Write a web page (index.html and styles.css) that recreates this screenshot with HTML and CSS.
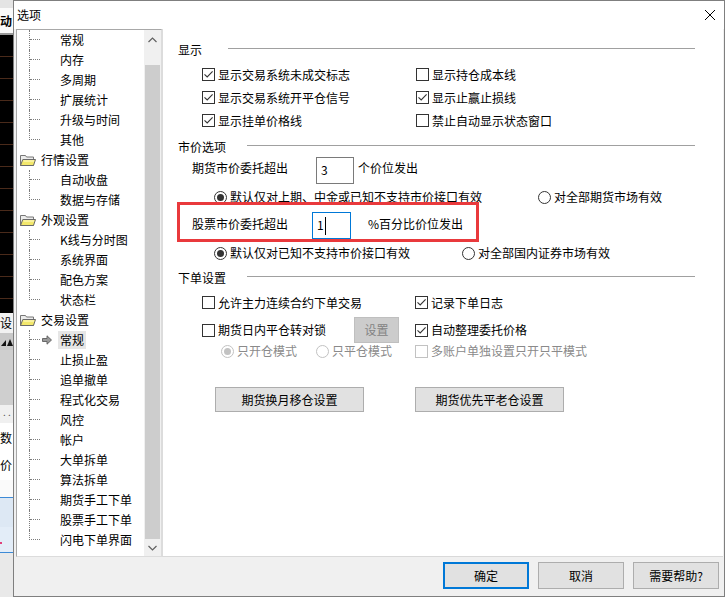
FILE: index.html
```html
<!DOCTYPE html>
<html lang="zh-CN">
<head>
<meta charset="utf-8">
<title>选项</title>
<link rel="stylesheet" href="styles.css">
</head>
<body>
<div class="screen">
  <div class="bgapp">
    <div class="bg-top"></div>
    <div class="bg-tab">动</div>
    <div class="bg-rule"></div>
    <div class="bg-chart"></div>
    <div class="bg-label">设</div>
    <div class="bg-tool"><span class="tri-a"></span><span class="tri-b"></span></div>
    <div class="bg-grey"></div>
    <div class="bg-dots">. .</div>
    <div class="bg-field">数</div>
    <div class="bg-field bg-field2">价</div>
    <div class="bg-blank"></div>
    <div class="bg-blue"></div>
    <div class="bg-blue2"><span class="bg-dot"></span></div>
    <div class="bg-rest"></div>
  </div>

  <div class="dialog">
    <div class="titlebar">
      <span class="title">选项</span>
      <svg class="close" width="10" height="10" viewBox="0 0 10 10"><path d="M0 0 L10 10 M10 0 L0 10" stroke="#000" stroke-width="1" fill="none"/></svg>
    </div>

    <div class="body">
      <div class="tree">
        <ul class="tree-list">
          <li class="node child"><span class="conn"><span class="conn-h"></span></span><span class="slot"></span><span class="lbl">常规</span></li>
          <li class="node child"><span class="conn"><span class="conn-h"></span></span><span class="slot"></span><span class="lbl">内存</span></li>
          <li class="node child"><span class="conn"><span class="conn-h"></span></span><span class="slot"></span><span class="lbl">多周期</span></li>
          <li class="node child"><span class="conn"><span class="conn-h"></span></span><span class="slot"></span><span class="lbl">扩展统计</span></li>
          <li class="node child"><span class="conn"><span class="conn-h"></span></span><span class="slot"></span><span class="lbl">升级与时间</span></li>
          <li class="node child last"><span class="conn"><span class="conn-h"></span></span><span class="slot"></span><span class="lbl">其他</span></li>
          <li class="node parent"><svg class="folder" width="16" height="13" viewBox="0 0 16 13"><path d="M0.5 1.5 L5.5 1.5 L6.5 3 L13.5 3 L13.5 11.5 L0.5 11.5 Z" fill="#ececec" stroke="#777"/><path d="M0.5 11.5 L2.8 5.5 L15.5 5.5 L13.5 11.5 Z" fill="#f3e86c" stroke="#6a6a6a"/><path d="M3.5 7 L14 7" stroke="#fffbd0"/></svg><span class="lbl">行情设置</span></li>
          <li class="node child"><span class="conn"><span class="conn-h"></span></span><span class="slot"></span><span class="lbl">自动收盘</span></li>
          <li class="node child last"><span class="conn"><span class="conn-h"></span></span><span class="slot"></span><span class="lbl">数据与存储</span></li>
          <li class="node parent"><svg class="folder" width="16" height="13" viewBox="0 0 16 13"><path d="M0.5 1.5 L5.5 1.5 L6.5 3 L13.5 3 L13.5 11.5 L0.5 11.5 Z" fill="#ececec" stroke="#777"/><path d="M0.5 11.5 L2.8 5.5 L15.5 5.5 L13.5 11.5 Z" fill="#f3e86c" stroke="#6a6a6a"/><path d="M3.5 7 L14 7" stroke="#fffbd0"/></svg><span class="lbl">外观设置</span></li>
          <li class="node child"><span class="conn"><span class="conn-h"></span></span><span class="slot"></span><span class="lbl">K线与分时图</span></li>
          <li class="node child"><span class="conn"><span class="conn-h"></span></span><span class="slot"></span><span class="lbl">系统界面</span></li>
          <li class="node child"><span class="conn"><span class="conn-h"></span></span><span class="slot"></span><span class="lbl">配色方案</span></li>
          <li class="node child last"><span class="conn"><span class="conn-h"></span></span><span class="slot"></span><span class="lbl">状态栏</span></li>
          <li class="node parent"><svg class="folder" width="16" height="13" viewBox="0 0 16 13"><path d="M0.5 1.5 L5.5 1.5 L6.5 3 L13.5 3 L13.5 11.5 L0.5 11.5 Z" fill="#ececec" stroke="#777"/><path d="M0.5 11.5 L2.8 5.5 L15.5 5.5 L13.5 11.5 Z" fill="#f3e86c" stroke="#6a6a6a"/><path d="M3.5 7 L14 7" stroke="#fffbd0"/></svg><span class="lbl">交易设置</span></li>
          <li class="node child sel"><span class="conn"><span class="conn-h"></span></span><span class="slot"><svg class="arrow" width="10" height="10" viewBox="0 0 10 10"><path d="M0.5 3.5 L5 3.5 L5 0.8 L9.5 5 L5 9.2 L5 6.5 L0.5 6.5 Z" fill="#9a9a9a" stroke="#5e5e5e" stroke-width="0.9"/></svg></span><span class="lbl">常规</span></li>
          <li class="node child"><span class="conn"><span class="conn-h"></span></span><span class="slot"></span><span class="lbl">止损止盈</span></li>
          <li class="node child"><span class="conn"><span class="conn-h"></span></span><span class="slot"></span><span class="lbl">追单撤单</span></li>
          <li class="node child"><span class="conn"><span class="conn-h"></span></span><span class="slot"></span><span class="lbl">程式化交易</span></li>
          <li class="node child"><span class="conn"><span class="conn-h"></span></span><span class="slot"></span><span class="lbl">风控</span></li>
          <li class="node child"><span class="conn"><span class="conn-h"></span></span><span class="slot"></span><span class="lbl">帐户</span></li>
          <li class="node child"><span class="conn"><span class="conn-h"></span></span><span class="slot"></span><span class="lbl">大单拆单</span></li>
          <li class="node child"><span class="conn"><span class="conn-h"></span></span><span class="slot"></span><span class="lbl">算法拆单</span></li>
          <li class="node child"><span class="conn"><span class="conn-h"></span></span><span class="slot"></span><span class="lbl">期货手工下单</span></li>
          <li class="node child"><span class="conn"><span class="conn-h"></span></span><span class="slot"></span><span class="lbl">股票手工下单</span></li>
          <li class="node child last"><span class="conn"><span class="conn-h"></span></span><span class="slot"></span><span class="lbl">闪电下单界面</span></li>
        </ul>
        <div class="scrollbar">
          <svg class="sb-btn" width="17" height="17" viewBox="0 0 17 17"><polyline points="4.5,12 8.5,8 12.5,12" fill="none" stroke="#606060" stroke-width="1.2"/></svg>
          <div class="sb-gap"></div>
          <div class="sb-thumb"></div>
          <svg class="sb-btn" width="17" height="17" viewBox="0 0 17 17"><polyline points="4.5,7 8.5,11 12.5,7" fill="none" stroke="#606060" stroke-width="1.2"/></svg>
        </div>
      </div>

      <div class="panel">
        <div class="sec-head sec-first"><span class="sec-label">显示</span><span class="sec-line narrow"></span></div>
        <div class="check-grid">
          <label class="ctl"><span class="cb on"><svg width="11" height="11" viewBox="0 0 11 11"><path d="M1.5 5.3 L4.2 8 L9.6 2.4" fill="none" stroke="#333" stroke-width="1.1"/></svg></span>显示交易系统未成交标志</label>
          <label class="ctl"><span class="cb"></span>显示持仓成本线</label>
          <label class="ctl"><span class="cb on"><svg width="11" height="11" viewBox="0 0 11 11"><path d="M1.5 5.3 L4.2 8 L9.6 2.4" fill="none" stroke="#333" stroke-width="1.1"/></svg></span>显示交易系统开平仓信号</label>
          <label class="ctl"><span class="cb on"><svg width="11" height="11" viewBox="0 0 11 11"><path d="M1.5 5.3 L4.2 8 L9.6 2.4" fill="none" stroke="#333" stroke-width="1.1"/></svg></span>显示止赢止损线</label>
          <label class="ctl"><span class="cb on"><svg width="11" height="11" viewBox="0 0 11 11"><path d="M1.5 5.3 L4.2 8 L9.6 2.4" fill="none" stroke="#333" stroke-width="1.1"/></svg></span>显示挂单价格线</label>
          <label class="ctl"><span class="cb"></span>禁止自动显示状态窗口</label>
        </div>

        <div class="sec-head sec-mkt"><span class="sec-label">市价选项</span><span class="sec-line"></span></div>
        <div class="field-row fut">
          <span class="field-label">期货市价委托超出</span>
          <span class="input">3</span>
          <span class="field-unit">个价位发出</span>
        </div>
        <div class="radio-row r1">
          <label class="ctl c1"><span class="rb on"></span>默认仅对上期、中金或已知不支持市价接口有效</label>
          <label class="ctl"><span class="rb"></span>对全部期货市场有效</label>
        </div>
        <div class="highlight">
          <div class="field-row stk">
            <span class="field-label">股票市价委托超出</span>
            <span class="input focus">1<span class="caret"></span></span>
            <span class="field-unit">%百分比价位发出</span>
          </div>
        </div>
        <div class="radio-row r2">
          <label class="ctl c1"><span class="rb on"></span>默认仅对已知不支持市价接口有效</label>
          <label class="ctl"><span class="rb"></span>对全部国内证券市场有效</label>
        </div>

        <div class="sec-head sec-ord"><span class="sec-label">下单设置</span><span class="sec-line"></span></div>
        <div class="ord-row ord1">
          <label class="ctl c-left"><span class="cb"></span>允许主力连续合约下单交易</label>
          <label class="ctl c-right"><span class="cb on"><svg width="11" height="11" viewBox="0 0 11 11"><path d="M1.5 5.3 L4.2 8 L9.6 2.4" fill="none" stroke="#333" stroke-width="1.1"/></svg></span>记录下单日志</label>
        </div>
        <div class="ord-row ord2">
          <div class="ctl c-left c-lock"><span class="cb"></span>期货日内平仓转对锁<button class="btn btn-dis" disabled>设置</button></div>
          <label class="ctl"><span class="cb on"><svg width="11" height="11" viewBox="0 0 11 11"><path d="M1.5 5.3 L4.2 8 L9.6 2.4" fill="none" stroke="#333" stroke-width="1.1"/></svg></span>自动整理委托价格</label>
        </div>
        <div class="mode-row">
          <label class="ctl dis m1"><span class="rb on dis"></span>只开仓模式</label>
          <label class="ctl dis m2"><span class="rb dis"></span>只平仓模式</label>
          <label class="ctl dis"><span class="cb dis"></span>多账户单独设置只开只平模式</label>
        </div>
        <div class="btn-row">
          <button class="btn wide">期货换月移仓设置</button>
          <button class="btn wide">期货优先平老仓设置</button>
        </div>
      </div>
    </div>

    <div class="footer">
      <button class="btn foot primary">确定</button>
      <button class="btn foot">取消</button>
      <button class="btn foot">需要帮助?</button>
    </div>
  </div>
</div>
</body>
</html>
```

FILE: styles.css
```css
* { box-sizing: border-box; }
html, body { margin: 0; padding: 0; }
body {
  width: 725px;
  height: 597px;
  overflow: hidden;
  font-family: "Microsoft YaHei", "Noto Sans CJK SC", sans-serif;
  font-size: 12px;
  color: #000;
  background: #f0f0f0;
}
.screen { display: flex; width: 725px; height: 597px; }

/* background application strip */
.bgapp { width: 13px; flex: none; display: flex; flex-direction: column; overflow: hidden; white-space: nowrap; }
.bg-top { height: 8px; background: #e4e4e4; }
.bg-tab { height: 25px; background: #fafafa; font-size: 12px; font-weight: bold; line-height: 25px; }
.bg-rule { height: 2px; background: #9a9a9a; }
.bg-chart { height: 278px; background: repeating-linear-gradient(to bottom, #000 0, #000 21px, #4a2a1a 21px, #4a2a1a 22px); }
.bg-label { height: 20px; background: #f2f2f2; font-size: 12px; line-height: 20px; }
.bg-tool { height: 17px; background: #c9c9c9; display: flex; align-items: flex-end; padding: 0 0 4px 1px; }
.tri-a { width: 0; height: 0; border-left: 5px solid transparent; border-bottom: 6px solid #111; margin-right: 1px; }
.tri-b { width: 0; height: 0; border-left: 3px solid transparent; border-right: 3px solid transparent; border-bottom: 7px solid #111; }
.bg-grey { height: 55px; background: #cfcfcf; }
.bg-dots { height: 18px; background: #f0f0f0; font-size: 10px; line-height: 14px; padding-left: 3px; color: #555; }
.bg-field { height: 30px; background: #fff; font-size: 12px; line-height: 30px; }
.bg-field2 { height: 27px; line-height: 24px; }
.bg-blank { height: 17px; background: #fafafa; }
.bg-blue { height: 30px; background: #dde8f4; border-top: 1px solid #3d8ad6; }
.bg-blue2 { height: 26px; background: #e3edf8; border-bottom: 1px solid #3d8ad6; padding: 15px 0 0 0; }
.bg-dot { display: block; width: 2px; height: 2px; background: #e0407a; }
.bg-rest { height: 44px; background: #e9e9e9; }

/* dialog */
.dialog {
  width: 712px;
  height: 597px;
  flex: none;
  border: 1px solid #7f7f7f;
  display: flex;
  flex-direction: column;
  background: #f0f0f0;
}
.titlebar { height: 28px; flex: none; background: #fff; display: flex; align-items: center; padding-left: 3px; }
.title { line-height: 16px; }
.close { margin-left: auto; margin-right: 9px; display: block; }

.body { height: 528px; flex: none; display: flex; }

/* tree */
.tree {
  margin-left: 2px;
  width: 146px;
  height: 528px;
  border: 1px solid #a8a8a8;
  border-right-color: #dcdcdc;
  border-bottom-color: #dcdcdc;
  background: #fff;
  display: flex;
}
.tree-list { flex: 1; list-style: none; margin: 0; padding: 0; overflow: hidden; }
.node { display: flex; align-items: center; height: 20px; white-space: nowrap; }
.child { padding-left: 12px; }
.conn { width: 11px; height: 20px; flex: none; border-left: 1px dotted #7c7c7c; }
.conn-h { display: block; width: 10px; height: 10px; border-bottom: 1px dotted #7c7c7c; }
.child.last .conn { border-left-color: transparent; }
.child.last .conn-h { margin-left: -1px; width: 11px; border-left: 1px dotted #7c7c7c; }
.slot { width: 18px; height: 20px; flex: none; display: flex; align-items: center; }
.arrow { display: block; margin-left: 2px; }
.lbl { line-height: 18px; padding: 0 2px; }
.sel .lbl { background: #e6e6e6; }
.parent { padding-left: 3px; }
.parent .lbl { padding: 0; }
.folder { display: block; margin-right: 5px; flex: none; }

.scrollbar { width: 17px; flex: none; background: #f0f0f0; display: flex; flex-direction: column; }
.sb-btn { display: block; flex: none; }
.sb-gap { height: 18px; flex: none; }
.sb-thumb { flex: 1; margin: 0 1px; background: #cdcdcd; }

/* right panel */
.panel {
  width: 561px;
  height: 528px;
  border-left: 1px solid #dcdcdc;
  border-bottom: 1px solid #d9d9d9;
  background: #fff;
  padding: 13px 28px 0 0;
}
.sec-head { display: flex; align-items: center; height: 16px; padding-left: 15px; }
.sec-label { line-height: 16px; white-space: nowrap; }
.sec-line { flex: 1; height: 1px; background: #a0a0a0; margin-left: 21px; margin-bottom: 3px; }
.sec-line.narrow { margin-left: 26px; }
.sec-mkt { margin-top: 7px; }
.sec-ord { margin-top: 6px; }

.ctl { display: flex; align-items: center; white-space: nowrap; line-height: 16px; }
.ctl.dis { color: #8a8a8a; }
.cb {
  width: 13px; height: 13px; flex: none;
  border: 1px solid #333; background: #fff;
  margin-right: 3px; display: flex;
}
.cb svg { display: block; }
.cb.dis { border-color: #c2c2c2; }
.rb {
  width: 13px; height: 13px; flex: none;
  border: 1px solid #333; border-radius: 50%; background: #fff;
  margin-right: 3px; display: flex; align-items: center; justify-content: center;
}
.rb.on::after { content: ""; width: 7px; height: 7px; border-radius: 50%; background: #333; }
.rb.dis { border-color: #c2c2c2; }
.rb.dis.on::after { background: #c2c2c2; }

.check-grid {
  display: grid;
  grid-template-columns: 214px auto;
  grid-auto-rows: 23px;
  padding-left: 39px;
  margin-top: 5px;
}

.field-row { display: flex; align-items: flex-start; white-space: nowrap; }
.field-label, .field-unit { line-height: 16px; }
.input {
  height: 27px; flex: none;
  border: 1px solid #7a7a7a; background: #fff;
  padding: 3px 0 0 4px; line-height: 17px;
  display: flex; align-items: flex-start;
}
.fut { margin-top: 2px; padding-left: 29px; height: 27px; }
.fut .field-label { width: 124px; margin-top: 3px; }
.fut .input { width: 38px; }
.fut .field-unit { margin-left: 4px; margin-top: 3px; }

.radio-row { display: flex; align-items: center; padding-left: 51px; }
.r1 { margin-top: 4px; height: 18px; }
.r1 .c1 { width: 324px; }
.r2 { height: 22px; }
.r2 .c1 { width: 248px; }

.highlight {
  position: relative;
  z-index: 1;
  margin: -4px 0 0 14px;
  width: 302px;
  height: 40px;
  border: 3px solid #e9393c;
  padding: 7px 0 0 12px;
}
.stk .field-label { width: 120px; margin-top: 4px; }
.stk .input { width: 39px; }
.stk .field-unit { margin-left: 17px; margin-top: 4px; }
.input.focus { border-color: #0078d7; }
.caret { display: block; width: 1px; height: 18px; background: #000; margin-left: 1px; margin-top: 1px; }

.ord-row { display: flex; align-items: center; padding-left: 39px; }
.ord1 { margin-top: 5px; height: 23px; }
.ord2 { margin-top: 3px; height: 26px; }
.c-left { width: 213px; }
.c-lock { padding-right: 16px; height: 26px; }
.mode-row { display: flex; align-items: center; height: 16px; padding-left: 58px; }
.m1 { width: 95px; }
.m2 { width: 99px; }
.btn-row { display: flex; gap: 51px; margin-top: 28px; padding-left: 52px; }

.btn {
  font-family: inherit;
  font-size: 12px;
  color: #000;
  background: #e1e1e1;
  border: 1px solid #adadad;
  padding: 0;
  margin: 0;
  display: flex;
  align-items: center;
  justify-content: center;
  line-height: 16px;
  white-space: nowrap;
}
.btn-dis { margin-left: auto; width: 45px; height: 26px; background: #cccccc; border-color: #bfbfbf; color: #838383; }
.btn.wide { width: 149px; height: 25px; }

.footer { height: 39px; flex: none; display: flex; justify-content: flex-end; gap: 9px; padding: 5px 5px 0 0; }
.btn.foot { width: 86px; height: 27px; }
.btn.primary { border: 2px solid #0078d7; }
```
